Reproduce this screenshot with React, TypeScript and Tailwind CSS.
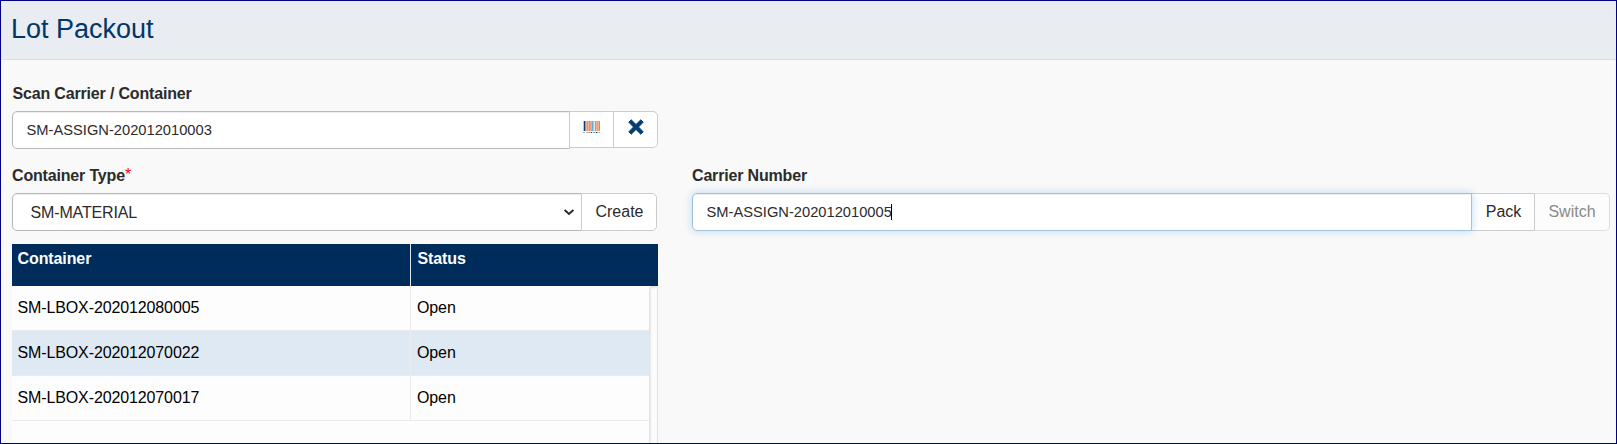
import React from "react";

const containers = [
  { name: "SM-LBOX-202012080005", status: "Open", selected: false },
  { name: "SM-LBOX-202012070022", status: "Open", selected: true },
  { name: "SM-LBOX-202012070017", status: "Open", selected: false },
];

const bars = [
  "#f0b497", "#0b3f73", "#54b5d8", "#f0b497", "#8fb0c0", "#f0b497", "#6ab8dc", "#f0a68c", "#b4b4cc",
  "#54b5e8", "#8fd0e6", "#f3e3dc", "#54c5b8", "#f0b497", "#8fc0c8", "#f0b497", "#54b5d8",
];

const dots = [
  "#9fb3c4", "#8fd0e6", "#ffffff", "#f0c4b0", "#8fb0c0", "#d8b9a8", "#8fa0ae", "#b9d5e0", "#0b3f73",
  "#e8c5b5", "#8fd0e6", "#54b5d8", "#f0c4b0", "#0b3f73", "#8fa0ae", "#d8b9a8", "#9fb3c4",
];

function BarcodeIcon() {
  return (
    <svg width="17" height="12" viewBox="0 0 17 12" shapeRendering="crispEdges">
      {bars.map((c, i) => (
        <rect key={i} x={i} y={0} width={1} height={10} fill={c} />
      ))}
      {dots.map((c, i) => (
        <rect key={i} x={i} y={11} width={1} height={1} fill={c} />
      ))}
    </svg>
  );
}

function ClearIcon() {
  return (
    <svg width="16" height="16" viewBox="0 0 16 16">
      <path
        fill="#043e75"
        stroke="#043e75"
        strokeWidth="1"
        strokeLinejoin="round"
        d="M3.2 0.8 L8 5.5 L12.8 0.8 L15.2 3.2 L10.5 8 L15.2 12.8 L12.8 15.2 L8 10.5 L3.2 15.2 L0.8 12.8 L5.5 8 L0.8 3.2 Z"
      />
    </svg>
  );
}

function Label({ children }: { children: React.ReactNode }) {
  return (
    <div className="h-6 pt-px text-[16px] leading-6 font-bold tracking-[-0.17px] whitespace-nowrap text-[#2b2b2b]">
      {children}
    </div>
  );
}

export default function App() {
  return (
    <div className="flex h-[444px] w-full flex-col overflow-hidden border border-[#000080] bg-[#f9f9f9] font-['Liberation_Sans',Arial,sans-serif] text-[16px] text-[#2b2b2b]">
      <header className="h-[59px] shrink-0 border-b border-[#dadeea] bg-[#e9ecf1] pt-[11px] pl-[10px]">
        <h1 className="text-[27px] leading-[34px] text-[#003768]">Lot Packout</h1>
      </header>

      <main className="flex flex-1 justify-between pr-[6px] pl-[11px]">
        <section className="flex w-[646px] flex-col pt-[21px]">
          <Label>
            <span className="pl-[0.5px]">Scan Carrier / Container</span>
          </Label>
          <div className="mt-[6px] flex h-[38px] items-start">
            <div className="flex h-[38px] w-[558px] items-center rounded-l-[5px] border border-[#b5b9bd] bg-white pl-[13.5px] text-[14.7px] shadow-[inset_0_1px_1px_rgba(0,0,0,0.075)]">
              SM-ASSIGN-202012010003
            </div>
            <button className="-ml-px flex h-[37px] w-[45px] justify-center border border-[#cccccc] bg-white pt-[9px]">
              <BarcodeIcon />
            </button>
            <button className="-ml-px flex h-[37px] w-[45px] justify-center rounded-r-[5px] border border-[#cccccc] bg-white pt-[7px] pl-px">
              <ClearIcon />
            </button>
          </div>

          <div className="mt-[14px]">
            <Label>
              Container Type<span className="align-[1px] text-[16px] leading-none font-normal text-[#ff0018]">*</span>
            </Label>
          </div>
          <div className="mt-[6px] flex h-[38px] w-[645px]">
            <div className="flex w-[570px] items-center justify-between rounded-l-[5px] border border-[#b5b9bd] bg-white pr-[6px] pl-[17.5px] shadow-[inset_0_1px_1px_rgba(0,0,0,0.075)]">
              <span className="pt-px tracking-[-0.15px]">SM-MATERIAL</span>
              <svg width="12" height="8" viewBox="0 0 12 8" fill="none">
                <path d="M1.6 2 L6 6 L10.4 2" stroke="#2b2b2b" strokeWidth="2" />
              </svg>
            </div>
            <button className="-ml-px flex-1 rounded-r-[5px] border border-[#cccccc] bg-white pl-px">Create</button>
          </div>

          <div className="mt-[13px] flex flex-1 flex-col text-black">
            <div className="flex h-[42px] shrink-0 bg-[#002c5c] leading-[20px] font-bold tracking-[-0.1px] text-white">
              <div className="w-[399px] border-r border-[#e0e3e8] pt-[5px] pl-[5.5px]">Container</div>
              <div className="pt-[5px] pl-[6.5px]">Status</div>
            </div>
            <div className="flex flex-1">
              <div className="flex w-[637px] flex-col bg-[#fdfdfd]">
                {containers.map((c) => (
                  <div
                    key={c.name}
                    className={
                      c.selected
                        ? "flex h-[45px] border-b border-[#ebebeb] bg-[#dfe9f3] leading-[43px]"
                        : "flex h-[45px] border-b border-[#ebebeb] leading-[43px]"
                    }
                  >
                    <div className="w-[399px] border-r border-[#ebebeb] pl-[5.5px] tracking-[-0.12px]">{c.name}</div>
                    <div className="pl-[6px] tracking-[-0.12px]">{c.status}</div>
                  </div>
                ))}
              </div>
              <div className="w-[9px] rounded-t-[4px] border border-b-0 border-[#e2e2e2] bg-[#fcfcfc] shadow-[inset_1px_1px_2px_rgba(0,0,0,0.08)]" />
            </div>
          </div>
        </section>

        <section className="w-[918px] pt-[103px]">
          <Label>Carrier Number</Label>
          <div className="mt-[6px] flex h-[38px]">
            <div className="z-10 flex w-[780px] items-center rounded-l-[5px] border border-[#a3c0dc] bg-white pl-[13.5px] text-[14.7px] shadow-[inset_0_1px_1px_rgba(0,0,0,0.075),0_0_8px_rgba(102,175,233,0.45)]">
              SM-ASSIGN-202012010005
              <span className="-ml-px h-4 w-px bg-black" />
            </div>
            <button className="-ml-px w-[64px] border border-[#cccccc] bg-white pl-px">Pack</button>
            <button className="flex-1 rounded-r-[5px] border border-l-0 border-[#dddddd] bg-[#fcfcfc] text-[#8a8a8a]">
              Switch
            </button>
          </div>
        </section>
      </main>
    </div>
  );
}
